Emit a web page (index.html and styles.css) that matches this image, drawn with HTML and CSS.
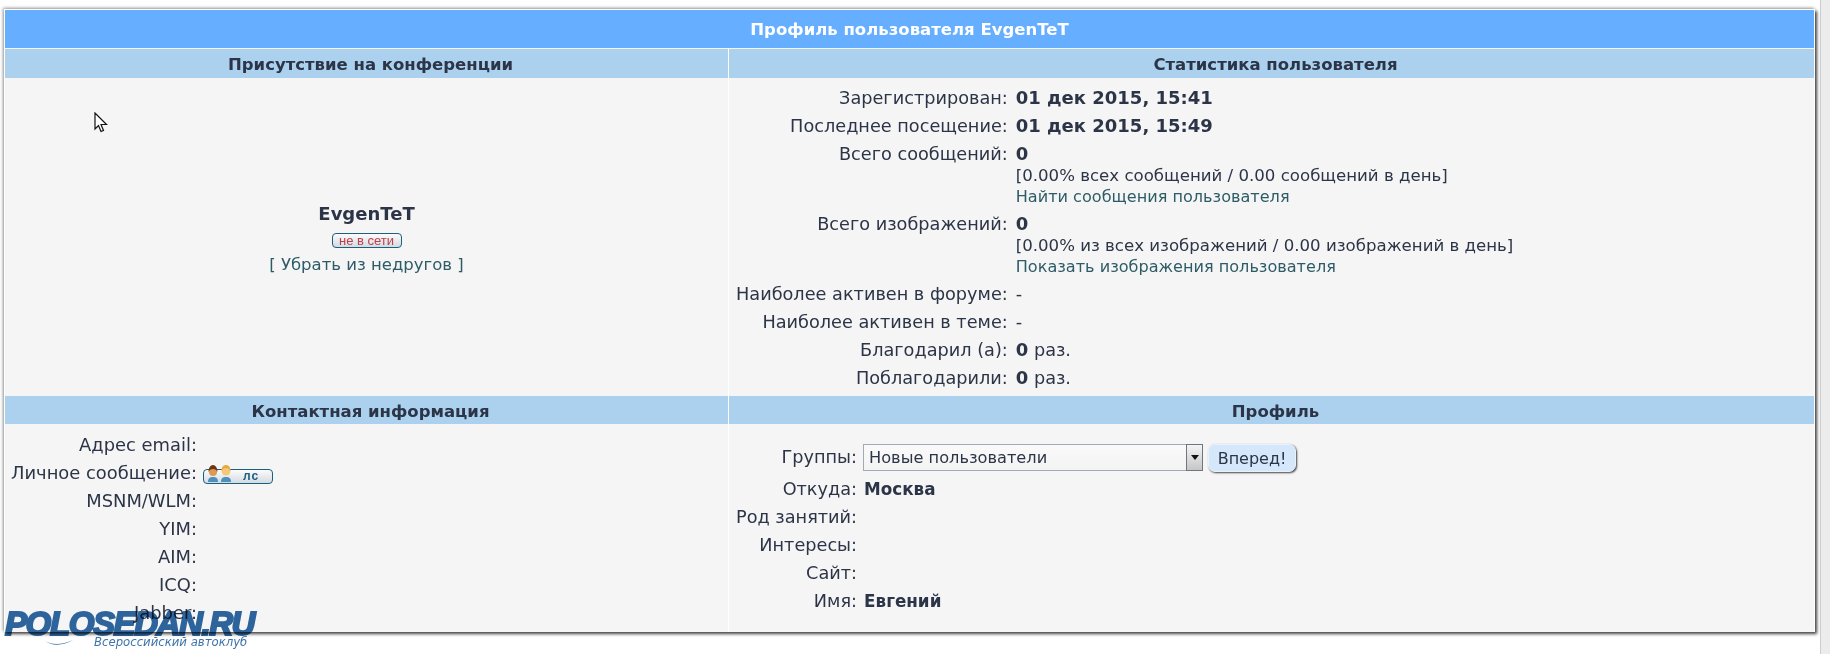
FILE: index.html
```html
<!DOCTYPE html>
<html lang="ru">
<head>
<meta charset="utf-8">
<title>Профиль пользователя EvgenTeT</title>
<link rel="stylesheet" href="styles.css">
</head>
<body>
<div class="page">
  <main class="panel">
    <h1 class="title">Профиль пользователя EvgenTeT</h1>
    <div class="board">
      <h2 class="head">Присутствие на конференции</h2>
      <h2 class="head">Статистика пользователя</h2>
      <section class="cell presence">
        <strong class="name">EvgenTeT</strong>
        <span class="badge offline">не в сети</span>
        <a class="link" href="#">[ Убрать из недругов ]</a>
      </section>
      <section class="cell stats">
        <dl class="info">
          <dt>Зарегистрирован:</dt><dd><b>01 дек 2015, 15:41</b></dd>
          <dt>Последнее посещение:</dt><dd><b>01 дек 2015, 15:49</b></dd>
          <dt>Всего сообщений:</dt><dd><b>0</b><br>[0.00% всех сообщений / 0.00 сообщений в день]<br><a class="link" href="#">Найти сообщения пользователя</a></dd>
          <dt>Всего изображений:</dt><dd><b>0</b><br>[0.00% из всех изображений / 0.00 изображений в день]<br><a class="link" href="#">Показать изображения пользователя</a></dd>
          <dt>Наиболее активен в форуме:</dt><dd class="large">-</dd>
          <dt>Наиболее активен в теме:</dt><dd class="large">-</dd>
          <dt>Благодарил (а):</dt><dd class="large"><b>0</b> раз.</dd>
          <dt>Поблагодарили:</dt><dd class="large"><b>0</b> раз.</dd>
        </dl>
      </section>
      <h2 class="head">Контактная информация</h2>
      <h2 class="head">Профиль</h2>
      <section class="cell contacts">
        <dl class="info">
          <dt>Адрес email:</dt><dd></dd>
          <dt>Личное сообщение:</dt>
          <dd>
            <span class="badge pm">
              <svg class="people" width="26" height="18" viewBox="0 0 26 18" aria-hidden="true">
                <path d="M1 17c0-4 2-5 5-5s5 1 5 5z" fill="#4d90b8"/>
                <circle cx="6" cy="7" r="4" fill="#dd9a55"/>
                <path d="M1.500 7c0-4 2-7 4.500-7s4.500 3 4.500 7c-1-2-2.500-3-4.500-3S2.500 5 1.500 7z" fill="#6b3413"/>
                <path d="M14 17c0-4 2-5 5-5s5 1 5 5z" fill="#4d90b8"/>
                <circle cx="19" cy="6" r="4.500" fill="#f4c878"/>
                <path d="M14.500 6c0-4 2-6 4.500-6s4.500 2 4.500 6c-1-2-2.500-3-4.500-3s-3.500 1-4.500 3z" fill="#e8a93e"/>
              </svg>
              лс
            </span>
          </dd>
          <dt>MSNM/WLM:</dt><dd></dd>
          <dt>YIM:</dt><dd></dd>
          <dt>AIM:</dt><dd></dd>
          <dt>ICQ:</dt><dd></dd>
          <dt>Jabber:</dt><dd></dd>
        </dl>
      </section>
      <section class="cell profile">
        <dl class="info">
          <dt class="group-label">Группы:</dt>
          <dd class="group-value">
            <span class="select-wrap">
              <select class="select"><option>Новые пользователи</option></select>
              <span class="select-arrow"></span>
            </span>
            <button class="go" type="button">Вперед!</button>
          </dd>
          <dt>Откуда:</dt><dd><b class="mid">Москва</b></dd>
          <dt>Род занятий:</dt><dd></dd>
          <dt>Интересы:</dt><dd></dd>
          <dt>Сайт:</dt><dd></dd>
          <dt>Имя:</dt><dd><b class="mid">Евгений</b></dd>
        </dl>
      </section>
    </div>
  </main>
  <div class="edge"></div>
</div>
<svg class="cursor" width="14" height="21" viewBox="0 0 14 21" aria-hidden="true">
  <path d="M1 1v16l3.500-3.500 2.500 6 2.500-1-2.500-6H12.500z" fill="#fff" stroke="#111" stroke-width="1.200"/>
</svg>
<div class="logo">
  <span class="logo-name">POLOSEDAN.RU</span>
  <svg class="logo-swoosh" width="28" height="6" viewBox="0 0 28 6" aria-hidden="true">
    <path d="M0 1c7 4 17 4 28-1C18 6 7 6 0 1z" fill="#2f68a3"/>
  </svg>
  <span class="logo-sub">Всероссийский автоклуб</span>
</div>
</body>
</html>
```
FILE: styles.css
```css
* { box-sizing: border-box; }
html, body { margin: 0; height: 100%; background: #fff; overflow: hidden; }
body {
  font-family: "DejaVu Sans", Verdana, sans-serif;
  font-size: 16px;
  line-height: 21px;
  color: #2c3547;
}
.page { display: flex; height: 654px; }
.panel {
  width: 1811px;
  height: 623px;
  margin: 9px 0 0 4px;
  background: #f5f5f5;
  border: 1px solid #fff;
  box-shadow: 2px 2px 3px #444, -1px -1px 3px #999;
}
.edge {
  width: 10px;
  margin-left: auto;
  background: #ececec;
  border-left: 1px solid #ccc;
}
.title {
  margin: 0;
  height: 38px;
  background: #66aeff;
  color: #fff;
  font-size: 16.5px;
  font-weight: bold;
  line-height: 40px;
  text-align: center;
}
.board {
  display: grid;
  grid-template-columns: 723px 1fr;
  grid-template-rows: 29px 318px 28px 1fr;
  margin-top: 1px;
  background: #fff;
  height: 583px;
  column-gap: 1px;
}
.head {
  margin: 0;
  padding-left: 8px;
  background: #abd1ef;
  font-size: 16.5px;
  font-weight: bold;
  line-height: 32px;
  text-align: center;
  overflow: hidden;
}
.cell { background: #f5f5f5; }
.presence {
  display: flex;
  flex-direction: column;
  align-items: center;
  justify-content: center;
  padding-top: 2px;
}
.name { font-size: 18px; line-height: 26px; }
.link { color: #2e5c66; text-decoration: none; }
.presence .link { font-size: 16.5px; }
.badge {
  display: inline-flex;
  align-items: center;
  font-family: "Liberation Sans", Arial, sans-serif;
  border: 1px solid #1e5f7a;
  border-radius: 4px;
  background: linear-gradient(#fbfbfb, #d3dbe3);
  position: relative;
}
.offline {
  width: 70px;
  height: 15px;
  justify-content: center;
  color: #c0404a;
  font-size: 13px;
  line-height: 13px;
  margin: 6px 0 6px;
}
.pm {
  width: 70px;
  height: 15px;
  padding-left: 39px;
  color: #1f5f80;
  font-size: 12px;
  font-weight: bold;
  line-height: 13px;
  letter-spacing: 1px;
  vertical-align: -2px;
}
.people { position: absolute; left: 3px; bottom: 0; }
.info {
  display: grid;
  grid-template-columns: max-content 1fr;
  align-items: baseline;
  column-gap: 7px;
  margin: 0;
}
.info dt, .info dd { margin: 0; padding: 4px 0 3px; line-height: 21px; }
.info dt { text-align: right; font-size: 17.7px; white-space: nowrap; }
.info dd { font-size: 16.6px; }
.info dd.large { font-size: 17.7px; }
.info dd b { font-size: 18px; line-height: 1; }
.info dd b.mid { font-size: 16.8px; }
.info dd .link { font-size: 16.1px; }
.stats { padding: 6px 0 0 7px; }
.stats .info { column-gap: 8px; }
.contacts { padding: 6px 0 0 6px; }
.contacts .info dt { font-size: 17.9px; }
.contacts .info { column-gap: 6px; grid-auto-rows: 28px; align-items: start; }
.contacts .info dd { height: 28px; }
.profile { padding: 20px 0 0 7px; }
.group-label { padding-top: 3px !important; align-self: start; height: 31px; }
.group-value { display: flex; align-items: flex-start; gap: 5px; padding: 0 !important; height: 31px; margin-left: -1px !important; align-self: start; }
.select-wrap { position: relative; display: block; width: 340px; height: 27px; }
.select {
  display: block;
  appearance: none;
  -webkit-appearance: none;
  width: 100%;
  height: 100%;
  padding: 0 0 0 5px;
  border: 1px solid #a2abb5;
  border-radius: 0;
  background: linear-gradient(#fafafa, #f3f3f3);
  color: #2c3547;
  font: 16.2px "DejaVu Sans", Verdana, sans-serif;
}
.select-arrow {
  position: absolute;
  right: 0;
  top: 0;
  width: 17px;
  height: 27px;
  background: linear-gradient(#f4f4f4, #c6c6c6);
  border: 1px solid #6f7680;
}
.select-arrow::after {
  content: "";
  position: absolute;
  left: 4px;
  top: 10px;
  border: 4px solid transparent;
  border-top: 5px solid #111;
  border-bottom: 0;
}
.go {
  width: 88px;
  height: 28px;
  padding: 0;
  background: #d5e8fb;
  border: 1px solid #e8f2fb;
  border-radius: 7px;
  box-shadow: 1px 1px 2px #444;
  color: #2c3547;
  font: 16px "DejaVu Sans", Verdana, sans-serif;
}
.cursor { position: absolute; left: 94px; top: 112px; }
.logo {
  position: absolute;
  left: 5px;
  top: 607px;
  width: 252px;
  height: 47px;
  mix-blend-mode: multiply;
}
.logo-name {
  position: absolute;
  left: 0;
  top: 0;
  font: italic bold 33px/34px "Liberation Sans", Arial, sans-serif;
  color: #2f68a3;
  -webkit-text-stroke: 2px #2f68a3;
  letter-spacing: -1.4px;
  white-space: nowrap;
}
.logo-swoosh { position: absolute; left: 40px; top: 33px; }
.logo-sub {
  position: absolute;
  left: 89px;
  top: 27px;
  font: italic 11.7px/16px "DejaVu Sans", Verdana, sans-serif;
  color: #3f74ab;
  white-space: nowrap;
}
```
